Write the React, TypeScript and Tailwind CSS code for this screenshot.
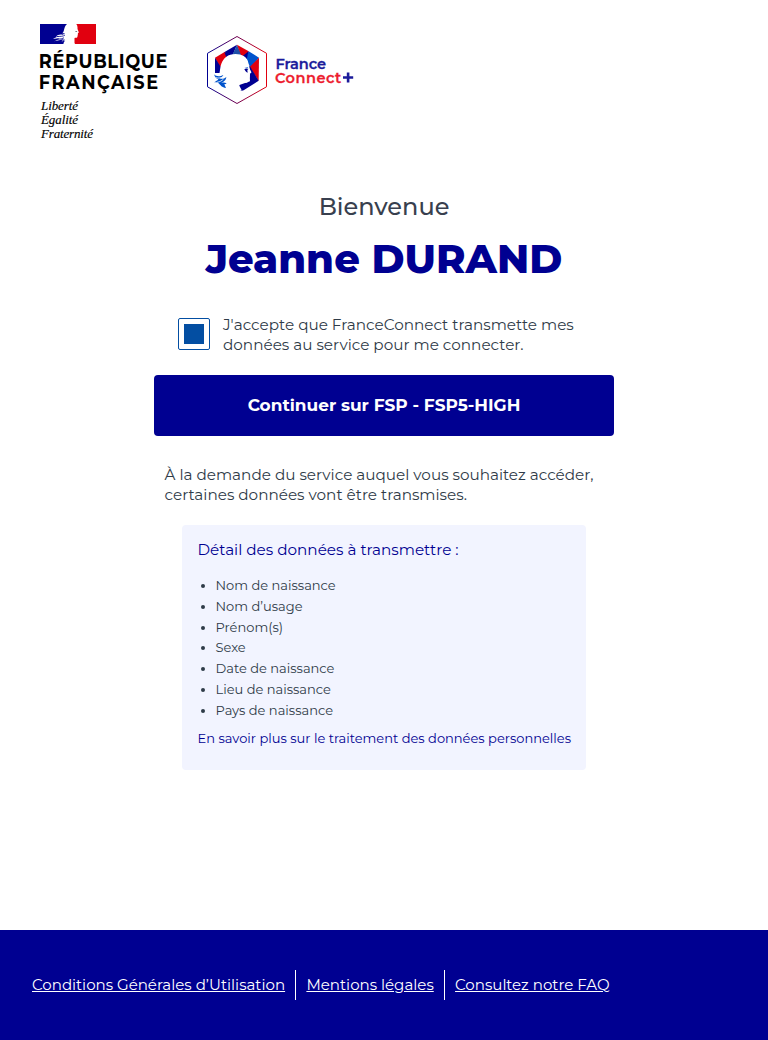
const ITEMS = [
  'Nom de naissance',
  'Nom d’usage',
  'Prénom(s)',
  'Sexe',
  'Date de naissance',
  'Lieu de naissance',
  'Pays de naissance',
];

const LINKS = ['Conditions Générales d’Utilisation', 'Mentions légales', 'Consultez notre FAQ'];

function RepubliqueLogo() {
  return (
    <svg className="-ml-1 block h-[120px] w-[136px]" viewBox="-4 0 136 120" role="img">
      <path fill="#000091" d="M0 0h30v20H0z" />
      <path fill="#e1000f" d="M34.500 0H56v20H34.500z" />
      <path
        fill="#fff"
        d="M27 0h9.300c.8 1 1.100 2 1.200 3.200-.1.900 0 1.500.200 2.200l1.100 2.800c.1.500-.5.700-1 .9.200.6.300 1 0 1.400.200.500-.1.900-.3 1.200.2 1.300-.4 2-1.500 2.100-1.500 0-2.300.4-2.600 1.600-.2 1.600.3 3.200 1.600 4.600H23.500c-.3-1.300.8-2.600 1.800-3.600-1.700.2-2.900 1.400-4.500 1 1.400-.4 2.200-1.400 3.200-2.300-1.600.5-2.700.2-3.900.9l-5.800 1.200c2.500-1.100 3.600-2.200 5.800-3.300-3 .1-4.600.6-7.100 1.200 2.300-1.500 4.300-2.300 7-3-1.700-.2-2.600.5-4.100.8 1.300-2 4-2.600 6.300-2.200 1.500-.2 2.300-.8 2.900-1.700-1.300.3-2 .4-3 .2 1.200-.7 1.500-1.600 1.900-3.200.4-2 1.200-4.700 3-6z"
      />
      <path
        fill="none"
        stroke="#000091"
        strokeWidth=".8"
        d="M17 12.500c3-.2 6 .2 8-1.500M15 16c3-1 6-.6 9-2.200M19 18.300c2.200-.8 4-1 5.500-2.600"
      />
      <path fill="#7d7d8c" d="M35.400 7h1.700v1h-1.700z" />
      <g
        fill="#000"
        transform="scale(.91 1)"
        style={{ fontFamily: 'Montserrat, Lato, sans-serif', fontWeight: 700, fontSize: '19.5px' }}
      >
        <text x="-1.300" y="44.200" textLength="141.300" lengthAdjust="spacing">RÉPUBLIQUE</text>
        <text x="-1.300" y="65.200" textLength="131" lengthAdjust="spacing">FRANÇAISE</text>
      </g>
      <g
        fill="#000"
        stroke="#000"
        strokeWidth=".15"
        style={{ fontFamily: '"Liberation Serif", serif', fontStyle: 'italic', fontSize: '13px' }}
      >
        <text x="1" y="86" textLength="37">Liberté</text>
        <text x="1" y="99.500" textLength="37">Égalité</text>
        <text x="1" y="114" textLength="52">Fraternité</text>
      </g>
    </svg>
  );
}

function FranceConnectLogo() {
  return (
    <svg className="block h-[70px] w-[150px]" viewBox="0 0 150 70" role="img">
      <defs>
        <linearGradient id="edge" x1="0" x2="1" y1="0" y2="0">
          <stop offset="0" stopColor="#000091" />
          <stop offset="1" stopColor="#e1000f" />
        </linearGradient>
      </defs>
      <path
        fill="none"
        stroke="url(#edge)"
        strokeWidth="1"
        d="M30 1.500 59.500 18.300v33.500L30 68.500.500 51.800V18.300z"
      />
      <g transform="translate(-12 -9) scale(.33333)">
        <path fill="#000091" d="m90 77 36-21-14 34-22 5z" />
        <path fill="#1f4fa8" d="m126 56 19 40-35-4z" />
        <path fill="#e1000f" d="m126 56 35 20-15 30-6-14z" />
        <path fill="#0053cc" d="m161 76 31 19-25 32-14-30z" />
        <path fill="#000091" d="m161 76-8 32-13-16z" />
        <path fill="#e1000f" d="m192 95-1 70-27-42z" />
        <path fill="#000091" d="m163 118 28 46-45 29c-6 3-14 0-14-6l-1-9 34-12z" />
        <path fill="#e1000f" d="m60 95 30-18 10 16-22 37z" />
        <path fill="#000091" d="m60 95 20 32-4 14-16 0z" />
        <path fill="#000091" d="m88 78 15 8-6 16z" />
        <path
          fill="#fff"
          d="M68 150c7-6 6-14 8-25 3-18 12-34 30-39 14-4 31-2 40 4 9 5 13 13 14 21-2 4-1 7 1 11l8 16c1 3-3 4-5 5 2 3 1 5 0 7 1 3 0 4-2 6 2 10-4 15-11 14-9-2-16-1-18 5-1 6 4 11 7 18-15 6-28 1-38-3-9-4-13-17-34-41z"
        />
        <path
          fill="#0053cc"
          d="M57 145c9 9 19 6 28 2-2 5-7 8-11 11 8 1 15 0 20-5-1 11-9 14-15 17 6 0 11-1 16 2-2 2-4 3-7 3l5 11c-12-1-17-9-23-15-4-2-8-1-12-2 5-3 9-5 12-9-6 0-10-7-13-15z"
        />
        <path fill="none" stroke="#fff" strokeWidth="2.500" d="M62 155c10 3 16 0 24-3M66 169c10-2 14-5 19-9" />
        <path fill="#000091" d="M148 130c4-4 8-3 12-1l-3 3 1 8c-4-1-7-4-10-10z" />
        <path fill="#0053cc" d="m148 126 10-2 2 3z" />
      </g>
      <g
        transform="scale(.94 1)"
        style={{ fontFamily: 'Montserrat, Lato, sans-serif', fontWeight: 600, fontSize: '15.500px' }}
      >
        <text x="72.800" y="33.700" fill="#1b1b9b" stroke="#1b1b9b" strokeWidth=".3" textLength="54">
          France
        </text>
        <text x="72.300" y="47.700" fill="#ed1c2e" stroke="#ed1c2e" strokeWidth=".3" textLength="70.500">
          Connect
        </text>
      </g>
      <path fill="none" stroke="#1b1b9b" strokeWidth="2.600" d="M136 42.500h10.200M141.100 37.400v10.200" />
    </svg>
  );
}

export default function App() {
  return (
    <div className="flex min-h-[1040px] flex-col bg-white font-[Montserrat,Inter,sans-serif] text-[#2f3b48]">
      <header className="flex h-[144px] gap-[35px] pl-10 pt-6">
        <RepubliqueLogo />
        <div className="pt-[11px]">
          <FranceConnectLogo />
        </div>
      </header>

      <main className="flex flex-1 flex-col items-center">
        <h1 className="mt-[48px] text-center">
          <span className="block text-[24px] font-medium leading-[30px] text-[#383f4e]">Bienvenue</span>
          <span className="mt-[12px] block text-[40px] font-extrabold leading-[50px] text-[#000091]">
            Jeanne DURAND
          </span>
        </h1>

        <label className="mt-[31px] flex w-[412px] items-start gap-[13px]">
          <span className="mt-[3px] flex size-8 shrink-0 items-center justify-center rounded-[2px] border border-[#034ea2]">
            <span className="size-5 bg-[#034ea2]" />
          </span>
          <span className="text-[15.22px] leading-5">
            J'accepte que FranceConnect transmette mes
            <br />
            données au service pour me connecter.
          </span>
        </label>

        <button className="mt-5 h-[61px] w-[460px] rounded-[4px] bg-[#000091] text-[16.95px] font-bold text-white">
          Continuer sur FSP - FSP5-HIGH
        </button>

        <p className="mt-[29px] w-[439px] text-[15.22px] leading-5">
          À la demande du service auquel vous souhaitez accéder, certaines données vont être transmises.
        </p>

        <section className="mt-5 h-[245px] w-[404px] rounded-[4px] bg-[#f2f4ff] pl-[15.5px] pt-[15px]">
          <h2 className="text-[15.23px] leading-5 text-[#000091]">Détail des données à transmettre :</h2>
          <ul className="mt-[15px] list-disc pl-[18px] text-[13px] leading-[20.8px]">
            {ITEMS.map((item) => (
              <li key={item}>{item}</li>
            ))}
          </ul>
          <a className="mt-[7px] block whitespace-nowrap text-[13px] leading-5 text-[#000091]">
            En savoir plus sur le traitement des données personnelles
          </a>
        </section>
      </main>

      <footer className="flex h-[110px] items-center bg-[#000091] px-8 text-[15.04px] text-white">
        {LINKS.map((link, i) => (
          <div
            key={link}
            className={
              i < LINKS.length - 1
                ? 'mr-[10.3px] flex h-[30px] items-center border-r border-white pr-[10px]'
                : 'flex h-[30px] items-center'
            }
          >
            <a className="underline">{link}</a>
          </div>
        ))}
      </footer>
    </div>
  );
}
